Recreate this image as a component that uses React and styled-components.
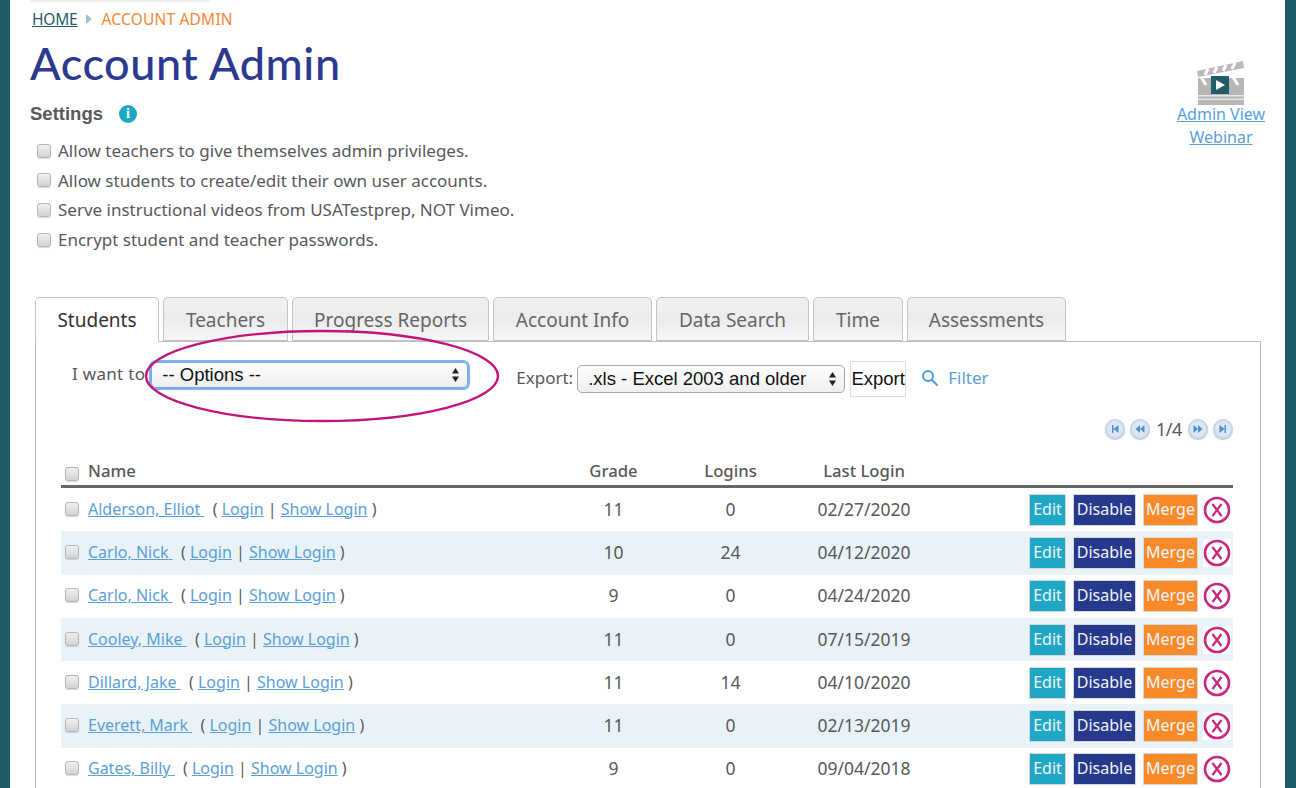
import React from 'react';
import styled, { createGlobalStyle } from 'styled-components';

const GlobalStyle = createGlobalStyle`
  html, body {
    margin: 0;
    height: 100%;
    overflow: hidden;
    background: #fff;
  }

  body {
    font-family: "Noto Sans", "Open Sans", sans-serif;
    color: #58595b;
  }
`;

const Page = styled.div`
  box-sizing: border-box;
  height: 788px;
  overflow: hidden;
  border-left: 10px solid #1f5c68;
  border-right: 11px solid #1f5c68;
  padding: 0 24px 0 20px;
  position: relative;
`;

const TopEdge = styled.div`
  height: 2px;
  width: 180px;
  background: #eee;
  border-radius: 0 0 3px 3px;
`;

const Header = styled.div`
  display: flex;
  justify-content: space-between;
  height: 295px;
`;

const Crumbs = styled.div`
  display: flex;
  align-items: center;
  gap: 9px;
  margin: 7px 0 0 2px;
  font-size: 15.5px;
  line-height: 20px;
  letter-spacing: -0.2px;
`;

const HomeLink = styled.a`
  color: #1f5c68;
  text-decoration: underline;
`;

const CrumbArrow = styled.span`
  width: 0;
  height: 0;
  border-top: 5px solid transparent;
  border-bottom: 5px solid transparent;
  border-left: 6px solid #9cc4cf;
`;

const CrumbCurrent = styled.span`
  color: #f58634;
  letter-spacing: 0.2px;
`;

const Title = styled.h1`
  margin: 7px 0 0;
  font-family: Lato, sans-serif;
  font-size: 45px;
  line-height: 54px;
  font-weight: 500;
  letter-spacing: 0.6px;
  color: #2b3a8f;
`;

const SettingsHead = styled.div`
  display: flex;
  align-items: center;
  gap: 16px;
  margin-top: 12px;
  height: 24px;
  font-family: "Liberation Sans", sans-serif;
  font-size: 18.5px;
  font-weight: 700;
  color: #58595b;
`;

const InfoBadge = styled.span`
  width: 18px;
  height: 18px;
  border-radius: 50%;
  background: #1ea8c5;
  color: #fff;
  font-family: "Liberation Serif", serif;
  font-size: 14px;
  font-weight: 700;
  line-height: 18px;
  text-align: center;
`;

const SettingsList = styled.div`
  display: flex;
  flex-direction: column;
  margin-top: 10px;
  padding-left: 7px;
`;

const SettingRow = styled.label`
  display: flex;
  align-items: center;
  gap: 7px;
  height: 29.6px;
  font-size: 17px;
`;

const Check = styled.input.attrs({ type: 'checkbox' })`
  appearance: none;
  box-sizing: border-box;
  flex: none;
  width: 14px;
  height: 14px;
  margin: 0;
  border: 1px solid #b5b5b5;
  border-radius: 3px;
  background: linear-gradient(#f1f1f1, #d2d2d2);
  box-shadow: 0 1px 1px rgba(0, 0, 0, 0.15);
`;

const Webinar = styled.a`
  display: flex;
  flex-direction: column;
  align-items: center;
  width: 90px;
  margin: 58px -5px 0 0;
  color: #5a9fd8;
  font-size: 16px;
  line-height: 23px;
  text-align: center;
  text-decoration: underline;
  white-space: nowrap;

  svg {
    margin-bottom: -3px;
  }
`;

const Tabs = styled.div`
  display: flex;
  gap: 4px;
  height: 45px;
  padding-left: 5px;
  position: relative;
  z-index: 1;
`;

const Tab = styled.div`
  box-sizing: border-box;
  width: ${p => p.$width}px;
  height: ${p => (p.$active ? 45 : 44)}px;
  border: 1px solid #c4c4c4;
  border-bottom: ${p => (p.$active ? 'none' : '1px solid #c4c4c4')};
  border-radius: 5px 5px 0 0;
  background: ${p => (p.$active ? '#fff' : 'linear-gradient(#f0f0f0, #ececec 55%, #f7f7f7)')};
  color: ${p => (p.$active ? '#333' : '#666')};
  font-size: 19px;
  line-height: 44px;
  text-align: center;
`;

const Panel = styled.div`
  box-sizing: border-box;
  margin: -1px 0 0 5px;
  width: 1226px;
  height: 460px;
  border: 1px solid #bdbdbd;
  border-bottom: none;
  padding: 0 27px 0 25px;
`;

const Toolbar = styled.div`
  display: flex;
  align-items: flex-start;
  height: 72px;
  position: relative;
`;

const ToolLabel = styled.span`
  font-size: 17px;
  letter-spacing: ${p => p.$spacing || 0}px;
  line-height: 22px;
  margin-top: ${p => p.$top}px;
  margin-left: ${p => p.$left}px;
`;

const SelectWrap = styled.div`
  position: relative;
  flex: none;
  width: ${p => p.$width}px;
  height: ${p => p.$height}px;
  margin-top: ${p => p.$top}px;
  margin-left: ${p => p.$left}px;

  svg {
    position: absolute;
    right: 8px;
    top: 50%;
    transform: translateY(-50%);
    pointer-events: none;
  }
`;

const Select = styled.select`
  appearance: none;
  box-sizing: border-box;
  width: 100%;
  height: 100%;
  padding: 0 0 2px 10px;
  border: 1px solid ${p => (p.$focused ? '#7aa7e8' : '#a9a9a9')};
  border-radius: 5px;
  outline: none;
  background: linear-gradient(#fdfdfd, #efefef);
  box-shadow: ${p => (p.$focused ? '0 0 0 2px #7fb0f0' : 'none')};
  color: #111;
  font-family: "Liberation Sans", sans-serif;
  font-size: 18.5px;
`;

const ExportButton = styled.button`
  box-sizing: border-box;
  width: 56px;
  height: 36px;
  margin: 19px 0 0 5px;
  padding: 0;
  border: 1px solid #ddd;
  background: #fff;
  color: #111;
  font-family: "Liberation Sans", sans-serif;
  font-size: 18.5px;
`;

const FilterLink = styled.a`
  display: flex;
  align-items: center;
  gap: 9px;
  margin: 25px 0 0 15px;
  color: #5a9fd8;
  font-size: 17px;
  line-height: 22px;
`;

const Pager = styled.div`
  display: flex;
  align-items: center;
  justify-content: flex-end;
  gap: 5.5px;
  height: 24px;
  margin-top: 3px;
  font-size: 18px;
  letter-spacing: -0.4px;
`;

const PagerButton = styled.span`
  display: flex;
  align-items: center;
  justify-content: center;
  width: 20px;
  height: 20px;
  border-radius: 50%;
  background: #dde7f2;
  box-shadow: inset 0 0 0 2px #c6d7ea, 0 1px 1px #bbb;
`;

const tableColumns = '506px 93px 141px 126px 1fr';

const HeadRow = styled.div`
  display: grid;
  grid-template-columns: ${tableColumns};
  align-items: center;
  box-sizing: border-box;
  height: 31px;
  margin-top: 16px;
  padding-bottom: 2px;
  border-bottom: 3px solid #666;
  font-size: 16.7px;
  font-weight: 500;
  color: #58595b;
`;

const HeadName = styled.div`
  display: flex;
  align-items: center;
  gap: 9px;
  padding-left: 4px;

  input {
    margin-top: 8px;
  }
`;

const Cell = styled.div`
  text-align: center;
`;

const NumCell = styled(Cell)`
  padding-bottom: 2px;
  font-size: 17.5px;
`;

const Row = styled.div`
  display: grid;
  grid-template-columns: ${tableColumns};
  align-items: center;
  height: 43.3px;
  background: ${p => (p.$striped ? '#e9f3f7' : '#fff')};
  font-size: 16px;
`;

const NameCell = styled.div`
  display: flex;
  align-items: center;
  gap: 9px;
  padding: 0 0 2px 4px;
  white-space: pre;
`;

const Link = styled.a`
  color: #5a9fd8;
  text-decoration: underline;
`;

const Actions = styled.div`
  display: flex;
  align-items: center;
  justify-content: flex-end;
  gap: 7px;
  padding-right: 2px;
`;

const ActionButton = styled.span`
  box-sizing: border-box;
  width: ${p => p.$width}px;
  height: 32px;
  border: 1px solid #d8d8d8;
  background: ${p => p.$color};
  color: #f2f6fa;
  line-height: 29px;
  text-align: center;
`;

const Remove = styled.span`
  display: flex;
  margin-left: -2px;
`;

const Ellipse = styled.svg`
  position: absolute;
  left: 81px;
  top: -16px;
  z-index: 2;
  pointer-events: none;
`;

const Arrows = () => (
  <svg width="9" height="16" viewBox="0 0 9 16">
    <path d="M4.5 1 L8 6.5 H1 Z M4.5 15 L1 9.5 H8 Z" fill="#222" />
  </svg>
);

const Clapper = () => (
  <svg width="48" height="46" viewBox="0 0 48 46">
    <path d="M0 11 L46 1 L47 8 L1 17 Z" fill="#b9babc" />
    <path d="M8 15 L11 9 M17 13 L20 7 M26 11 L29 5 M35 9 L38 3" stroke="#fff" strokeWidth="3" />
    <rect x="1" y="18" width="46" height="27" fill="#b4b6b8" />
    <path d="M4 17 L9 25 M36 17 L41 25" stroke="#fff" strokeWidth="3" />
    <rect x="1" y="35" width="46" height="1.5" fill="#e6e6e6" />
    <rect x="1" y="38.5" width="46" height="1.5" fill="#e6e6e6" />
    <rect x="14" y="16" width="18" height="18" fill="#1f5c68" />
    <path d="M19 20 L28 25 L19 30 Z" fill="#fff" />
  </svg>
);

const SearchIcon = () => (
  <svg width="18" height="18" viewBox="0 0 18 18" fill="none" stroke="#4f9bd9" strokeWidth="2">
    <circle cx="7" cy="7" r="5" />
    <path d="M11 11 L16 16" strokeLinecap="round" />
  </svg>
);

const PagerIcon = ({ d }) => (
  <svg width="10" height="10" viewBox="0 0 10 10">
    <path d={d} fill="#4f8fd0" />
  </svg>
);

const RemoveIcon = ({ striped }) => (
  <svg width="28" height="28" viewBox="0 0 28 28" fill="none">
    {striped && <rect width="28" height="28" fill="#fff" />}
    <circle cx="14" cy="14" r="12" stroke="#c9267f" strokeWidth="2.6" />
    <path d="M9.5 8 L18.5 20 M18.5 8 L9.5 20" stroke="#c9267f" strokeWidth="2.2" />
  </svg>
);

const settings = [
  'Allow teachers to give themselves admin privileges.',
  'Allow students to create/edit their own user accounts.',
  'Serve instructional videos from USATestprep, NOT Vimeo.',
  'Encrypt student and teacher passwords.',
];

const tabs = [
  ['Students', 124],
  ['Teachers', 125],
  ['Progress Reports', 197],
  ['Account Info', 159],
  ['Data Search', 153],
  ['Time', 90],
  ['Assessments', 159],
];

const students = [
  ['Alderson, Elliot', 11, 0, '02/27/2020'],
  ['Carlo, Nick', 10, 24, '04/12/2020'],
  ['Carlo, Nick', 9, 0, '04/24/2020'],
  ['Cooley, Mike', 11, 0, '07/15/2019'],
  ['Dillard, Jake', 11, 14, '04/10/2020'],
  ['Everett, Mark', 11, 0, '02/13/2019'],
  ['Gates, Billy', 9, 0, '09/04/2018'],
];

const pagerIcons = {
  first: 'M2 1 H3.5 V9 H2 Z M8.5 1 V9 L3.5 5 Z',
  prev: 'M5 1 V9 L0.5 5 Z M9.5 1 V9 L5 5 Z',
  next: 'M0.5 1 L5 5 L0.5 9 Z M5 1 L9.5 5 L5 9 Z',
  last: 'M1.5 1 L6.5 5 L1.5 9 Z M6.5 1 H8 V9 H6.5 Z',
};

const App = () => (
  <>
    <GlobalStyle />
    <Page>
      <TopEdge />
      <Header>
        <div>
          <Crumbs>
            <HomeLink>HOME</HomeLink>
            <CrumbArrow />
            <CrumbCurrent>ACCOUNT ADMIN</CrumbCurrent>
          </Crumbs>
          <Title>Account Admin</Title>
          <SettingsHead>
            Settings
            <InfoBadge>i</InfoBadge>
          </SettingsHead>
          <SettingsList>
            {settings.map(text => (
              <SettingRow key={text}>
                <Check />
                {text}
              </SettingRow>
            ))}
          </SettingsList>
        </div>
        <Webinar>
          <Clapper />
          <span>Admin View</span>
          <span>Webinar</span>
        </Webinar>
      </Header>
      <Tabs>
        {tabs.map(([label, width], i) => (
          <Tab key={label} $width={width} $active={i === 0}>{label}</Tab>
        ))}
      </Tabs>
      <Panel>
        <Toolbar>
          <ToolLabel $top={21} $left={11} $spacing={0.3}>I want to</ToolLabel>
          <SelectWrap $width={317} $height={26} $top={20} $left={6}>
            <Select $focused defaultValue="options">
              <option value="options">-- Options --</option>
            </Select>
            <Arrows />
          </SelectWrap>
          <ToolLabel $top={25} $left={48}>Export:</ToolLabel>
          <SelectWrap $width={268} $height={28} $top={23} $left={4}>
            <Select defaultValue="xls">
              <option value="xls">.xls - Excel 2003 and older</option>
            </Select>
            <Arrows />
          </SelectWrap>
          <ExportButton>Export</ExportButton>
          <FilterLink>
            <SearchIcon />
            Filter
          </FilterLink>
          <Ellipse width="360" height="100" viewBox="0 0 360 100" fill="none">
            <ellipse cx="180" cy="50" rx="176" ry="45" stroke="#c0157a" strokeWidth="2.4" />
          </Ellipse>
        </Toolbar>
        <Pager>
          <PagerButton><PagerIcon d={pagerIcons.first} /></PagerButton>
          <PagerButton><PagerIcon d={pagerIcons.prev} /></PagerButton>
          1/4
          <PagerButton><PagerIcon d={pagerIcons.next} /></PagerButton>
          <PagerButton><PagerIcon d={pagerIcons.last} /></PagerButton>
        </Pager>
        <HeadRow>
          <HeadName>
            <Check />
            Name
          </HeadName>
          <Cell>Grade</Cell>
          <Cell>Logins</Cell>
          <Cell>Last Login</Cell>
        </HeadRow>
        {students.map(([name, grade, logins, last], i) => (
          <Row key={`${name}-${last}`} $striped={i % 2 === 1}>
            <NameCell>
              <Check />
              <span>
                <Link>{name} </Link>{'  ( '}<Link>Login</Link>{' | '}<Link>Show Login</Link>{' )'}
              </span>
            </NameCell>
            <NumCell>{grade}</NumCell>
            <NumCell>{logins}</NumCell>
            <NumCell>{last}</NumCell>
            <Actions>
              <ActionButton $width={37} $color="#1ea8c5">Edit</ActionButton>
              <ActionButton $width={63} $color="#27398c">Disable</ActionButton>
              <ActionButton $width={55} $color="#f98a29">Merge</ActionButton>
              <Remove><RemoveIcon striped={i % 2 === 1} /></Remove>
            </Actions>
          </Row>
        ))}
      </Panel>
    </Page>
  </>
);

export default App;
